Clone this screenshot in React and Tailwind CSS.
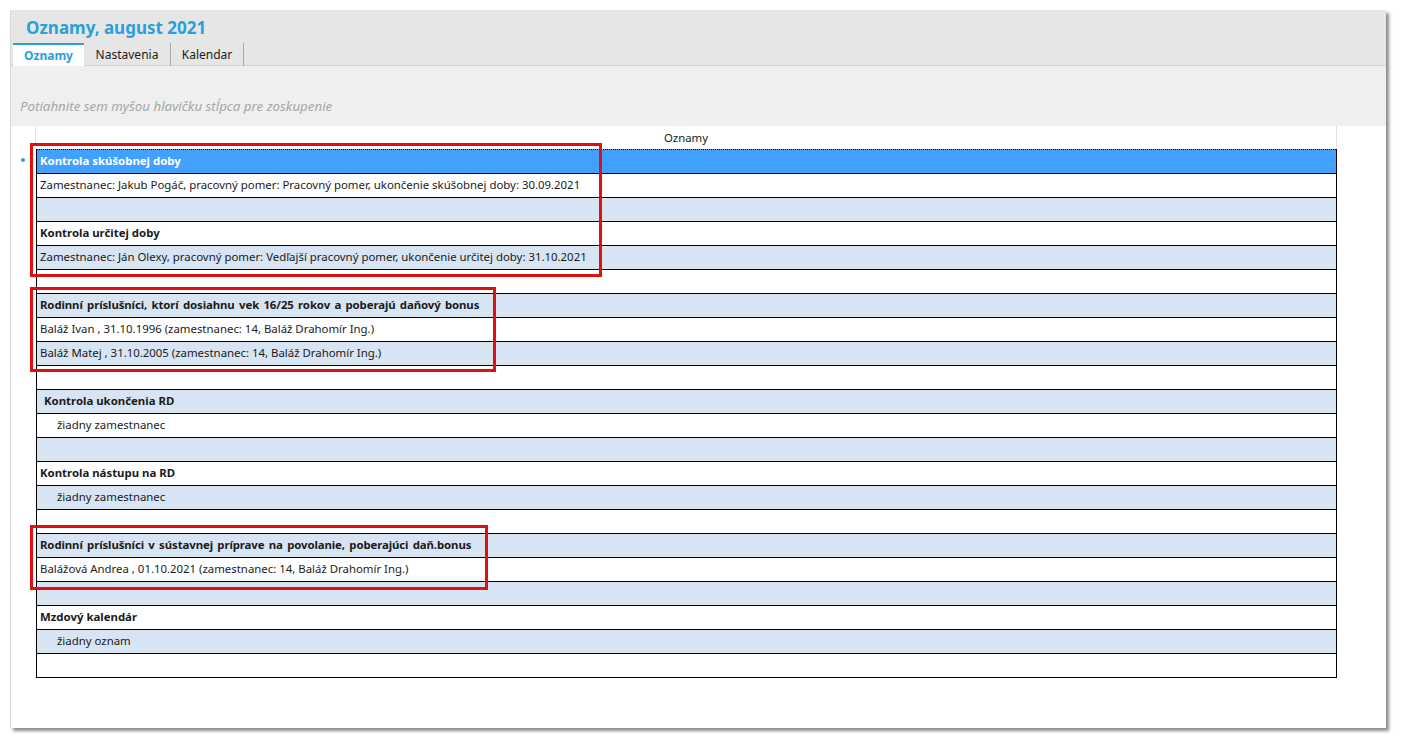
import React from 'react';

const FONT = { fontFamily: '"Noto Sans", "Open Sans", sans-serif' };

// kind: 'sel' | 'head' | 'text' | 'sub' | 'empty'
const ROWS = [
  { kind: 'sel', text: 'Kontrola skúšobnej doby' },
  { kind: 'text', text: 'Zamestnanec: Jakub Pogáč, pracovný pomer: Pracovný pomer, ukončenie skúšobnej doby: 30.09.2021' },
  { kind: 'empty' },
  { kind: 'head', text: 'Kontrola určitej doby' },
  { kind: 'text', text: 'Zamestnanec: Ján Olexy, pracovný pomer: Vedľajší pracovný pomer, ukončenie určitej doby: 31.10.2021' },
  { kind: 'empty' },
  { kind: 'head', text: 'Rodinní príslušníci, ktorí dosiahnu vek 16/25 rokov a poberajú daňový bonus', wide: true },
  { kind: 'text', text: 'Baláž Ivan , 31.10.1996 (zamestnanec: 14, Baláž Drahomír Ing.)' },
  { kind: 'text', text: 'Baláž Matej , 31.10.2005 (zamestnanec: 14, Baláž Drahomír Ing.)' },
  { kind: 'empty' },
  { kind: 'head', text: 'Kontrola ukončenia RD', indent: true },
  { kind: 'sub', text: 'žiadny zamestnanec' },
  { kind: 'empty' },
  { kind: 'head', text: 'Kontrola nástupu na RD' },
  { kind: 'sub', text: 'žiadny zamestnanec' },
  { kind: 'empty' },
  { kind: 'head', text: 'Rodinní príslušníci v sústavnej príprave na povolanie, poberajúci daň.bonus', wide: true },
  { kind: 'text', text: 'Balážová Andrea , 01.10.2021 (zamestnanec: 14, Baláž Drahomír Ing.)' },
  { kind: 'empty' },
  { kind: 'head', text: 'Mzdový kalendár' },
  { kind: 'sub', text: 'žiadny oznam' },
  { kind: 'empty' },
];

function Row({ row, i }) {
  const alt = i % 2 === 0;
  let cls = 'flex h-[24px] items-center border-t border-black pb-[2px] text-[11.4px] ';
  if (row.kind === 'sel') cls += 'bg-[#42a1ff] text-white font-bold border-dotted ';
  else cls += (alt ? 'bg-[#d7e4f2] ' : 'bg-white ') + 'text-[#1a1a1a] ';
  if (row.kind === 'head') cls += 'font-bold ';
  let pad = 'pl-[3px]';
  if (row.kind === 'sub') pad = 'pl-[20px]';
  if (row.indent) pad = 'pl-[7px]';
  return (
    <div className={cls + pad}>
      <span className={row.wide ? 'tracking-[-0.1px] [word-spacing:1.5px]' : ''}>{row.text || ''}</span>
    </div>
  );
}

export default function App() {
  return (
    <div className="h-[750px] w-[1405px] bg-white pl-[10px] pt-[10px]" style={FONT}>
      <div className="relative flex h-[718px] w-[1376px] flex-col border-l border-[#d8d8d8] bg-white shadow-[3px_3px_3px_rgba(0,0,0,0.45)]">
        {/* header */}
        <div className="h-[56px] border-b border-[#d4d4d4] bg-[#e6e6e6]">
          <div className="pl-[15px] pt-[6px] text-[17px] font-bold leading-[24px] text-[#2b9fd9]">
            Oznamy, august 2021
          </div>
          <div className="mt-[3px] flex h-[23px] text-[12px] text-[#1a1a1a]">
            <div className="ml-[2px] flex w-[71px] items-center justify-center border-t-2 border-[#2b9fd9] bg-white font-bold text-[#2b9fd9]">
              Oznamy
            </div>
            <div className="flex w-[87px] items-center justify-center border-r border-[#a8a8a8]">Nastavenia</div>
            <div className="flex w-[73px] items-center justify-center border-r border-[#a8a8a8]">Kalendar</div>
          </div>
        </div>

        {/* group panel */}
        <div className="flex h-[60px] items-end bg-[#efefef] pb-[9px] pl-[9px] text-[13.3px] italic text-[#a6a6a6]">
          Potiahnite sem myšou hlavičku stĺpca pre zoskupenie
        </div>

        {/* grid */}
        <div className="flex">
          <div className="relative w-[25px] shrink-0">
            <div className="h-[23px] border-r border-[#e2e2e2]" />
            <div className="absolute left-[10px] top-[32px] h-[4px] w-[4px] rounded-full bg-[#2b9fd9]" />
          </div>
          <div className="w-[1301px]">
            <div className="flex h-[23px] items-center justify-center border-r border-[#e2e2e2] text-[11.4px] text-[#1a1a1a]">
              Oznamy
            </div>
            <div className="border-x border-b border-black">
              {ROWS.map((r, i) => (
                <Row key={i} row={r} i={i} />
              ))}
            </div>
          </div>
        </div>

        {/* annotation boxes */}
        <div className="pointer-events-none absolute left-[19px] top-[133px] h-[134px] w-[572px] border-[3px] border-[#e01010]" />
        <div className="pointer-events-none absolute left-[19px] top-[277px] h-[85px] w-[466px] border-[3px] border-[#e01010]" />
        <div className="pointer-events-none absolute left-[19px] top-[515px] h-[65px] w-[458px] border-[3px] border-[#e01010]" />
      </div>
    </div>
  );
}
